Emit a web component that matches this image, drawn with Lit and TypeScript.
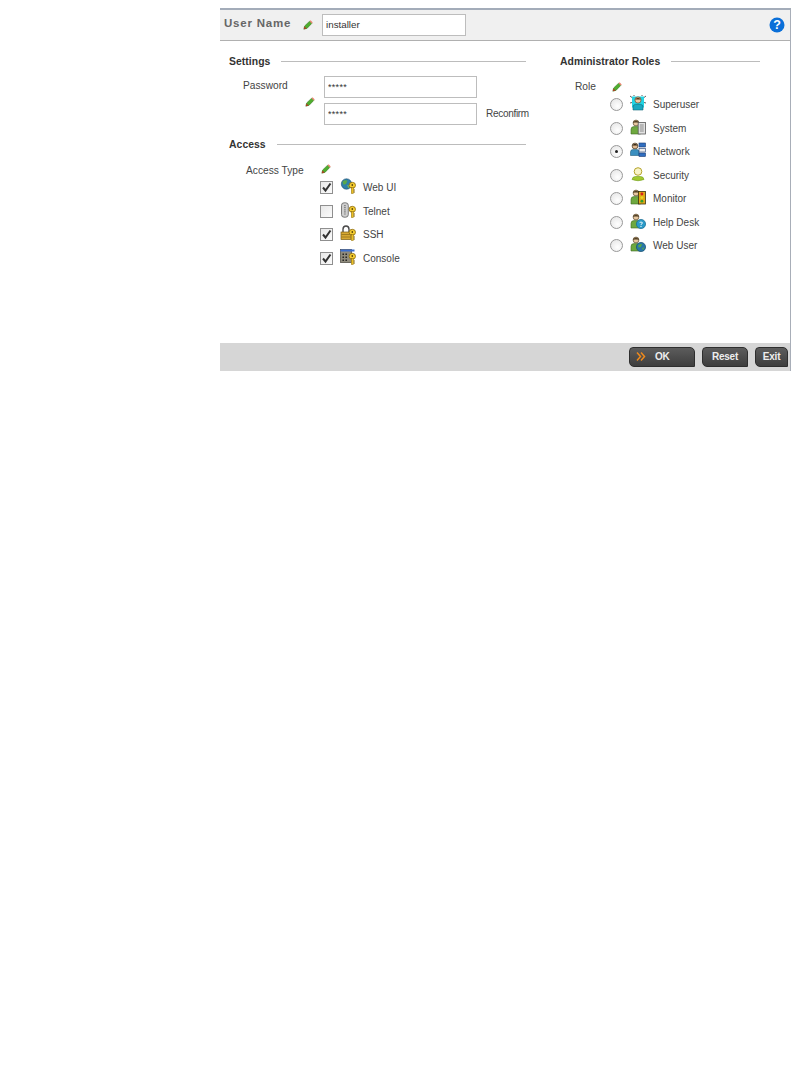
import { LitElement, html, css, svg } from "lit";
import { customElement } from "lit/decorators.js";

const pencil = html`<svg class="pen" width="10" height="10" viewBox="0 0 10 10"><path d="M.8 9.2 L1.6 6 L6.6 1.2 L8.8 3.4 L4 8.4 Z" fill="#4fae2e" stroke="#2f6d1c" stroke-width=".5"/><path d="M6.6 1.2 L7.6 .3 L9.7 2.4 L8.8 3.4 Z" fill="#e8806a"/><path d="M.8 9.2 L1.6 6.4 L3.6 8.4 Z" fill="#b33a22"/></svg>`;

const key = svg`<ellipse cx="12.3" cy="7.3" rx="3.2" ry="3" fill="#f4cc30" stroke="#8a6a10" stroke-width=".8"/><rect x="11.3" y="9.5" width="2.2" height="6" fill="#ecc020" stroke="#8a6a10" stroke-width=".5"/><rect x="11.6" y="6.2" width="1.4" height="1.6" fill="#4a3808"/><path d="M13.6 12h1.4M13.6 14h1.4" stroke="#8a6a10"/>`;

const person = svg`<circle cx="6" cy="4" r="2.9" fill="#e8c8a0" stroke="#5a4a30" stroke-width=".7"/><path d="M3 3.4 Q6 .4 9 3.4" fill="#4a3a20" stroke="#3a2a10" stroke-width=".6"/><path d="M1 15 V10.5 Q1 7.6 4 7.6 H8 Q10 7.6 10.6 9.5 V15 Z" fill="#6ea83f" stroke="#3d6a22" stroke-width=".6"/>`;

const ic = (c: unknown) => html`<svg class="ic" width="16" height="16" viewBox="0 0 16 16">${c}</svg>`;

const accessIcons = {
  web: ic(svg`<circle cx="6.5" cy="6" r="5.2" fill="#2f7fa8" stroke="#1f4f70" stroke-width=".6"/><path d="M2.5 3.5 Q5 1.5 7.5 2.6 L6 6 L3.5 6.8Z" fill="#5aa84a"/><path d="M7 7 L10 7.5 L8.5 10.4 Z" fill="#6ab45a"/>${key}`),
  telnet: ic(svg`<rect x="1.5" y=".8" width="6.8" height="14.4" rx="2.6" fill="#cfcfcf" stroke="#6e6e6e" stroke-width=".9"/><path d="M4.9 3v10" stroke="#888" stroke-width="1.8" stroke-dasharray="1.2 .9"/>${key}`),
  ssh: ic(svg`<path d="M3 7 V4.2 Q3 1 6 1 Q9 1 9 4.2 V7" fill="none" stroke="#4b4b4b" stroke-width="1.4"/><rect x="1" y="7" width="10" height="7.5" fill="#d7a832" stroke="#7b5d12" stroke-width=".7"/><path d="M1.5 9.5h9M1.5 12h9" stroke="#8a6a18" stroke-width=".7"/>${key}`),
  console: ic(svg`<rect x=".5" y=".5" width="11" height="13" fill="#8f8b7c" stroke="#45423a" stroke-width=".7"/><rect x=".5" y=".5" width="14" height="2" fill="#3a6fd0"/><path d="M2.5 4.5h1.4v1.4H2.5zM5.5 4.5h1.4v1.4H5.5zM2.5 7.5h1.4v1.4H2.5zM5.5 7.5h1.4v1.4H5.5zM2.5 10.5h1.4v1.4H2.5zM5.5 10.5h1.4v1.4H5.5z" fill="#1c1c1c"/>${key}`),
};

const roleIcons = {
  superuser: ic(svg`<rect x="2" y="1.5" width="12" height="11" fill="#22d4e4"/><path d="M0 1l2 1.5M16 1l-2 1.5M0 8l2-.5M16 8l-2-.5M4 0v1M12 0v1" stroke="#333" stroke-width=".8"/><circle cx="8" cy="5" r="3.1" fill="#eec9a4" stroke="#6a4a2a" stroke-width=".7"/><path d="M5 4.5Q8 .8 11 4.5" fill="#5a3a1a"/><path d="M3 15V12Q3 9.4 5.5 9.4H10.5Q13 9.4 13 12V15Z" fill="#19a8c0" stroke="#106878" stroke-width=".6"/>`),
  system: ic(svg`${person}<rect x="8.2" y="3.5" width="7.3" height="11.5" fill="#e2e2e2" stroke="#5a5a5a" stroke-width=".8"/><path d="M9.8 6h4M9.8 8h4M9.8 10h4M9.8 12h4" stroke="#777" stroke-width=".8"/>`),
  network: ic(svg`<circle cx="5" cy="4" r="2.9" fill="#e0b890" stroke="#3a3020" stroke-width=".7"/><path d="M2.2 3.4Q5 .6 7.8 3.4" fill="#2a2010"/><path d="M.5 13.5V10Q.5 7.6 3 7.6H7Q9 7.6 9 10V13.5Z" fill="#3a8fc0" stroke="#20607f" stroke-width=".6"/><rect x="9" y="1" width="6.5" height="4" fill="#2f6ec0" stroke="#1a3a70" stroke-width=".6"/><rect x="9" y="6.5" width="6.5" height="3.5" fill="#eee" stroke="#1a3a70" stroke-width=".6"/><rect x="9" y="11" width="6.5" height="3.5" fill="#2f6ec0" stroke="#1a3a70" stroke-width=".6"/>`),
  security: ic(svg`<circle cx="8" cy="5.5" r="3.8" fill="#f8f3c8" stroke="#b5a42a" stroke-width="1"/><path d="M2 13.5Q2.5 10.5 5.5 10.5H10.5Q13.5 10.5 14 13.5Q8 16 2 13.5Z" fill="#a2c92f" stroke="#6e9a1c" stroke-width=".6"/>`),
  monitor: ic(svg`${person}<rect x="8.4" y="2.5" width="7" height="12.5" fill="#e0a818" stroke="#3a3010" stroke-width=".8"/><circle cx="11.9" cy="5" r="1.4" fill="#d8241c"/><circle cx="11.9" cy="8.6" r="1.4" fill="#e8d820"/><circle cx="11.9" cy="12.2" r="1.4" fill="#30a030"/>`),
  help: ic(svg`${person}<circle cx="11" cy="11" r="4.6" fill="#2a9ac8" stroke="#156a90" stroke-width=".7"/><path d="M9.6 9.6Q11 8.4 12.4 9.6Q12.6 10.8 11 11.4V12" fill="none" stroke="#fff" stroke-width=".9"/><circle cx="11" cy="13.4" r=".6" fill="#fff"/>`),
  webuser: ic(svg`${person}<circle cx="11" cy="11" r="4.6" fill="#2877a8" stroke="#174f70" stroke-width=".7"/><path d="M8 9.5Q10 7.5 12 8L11 11L8.7 11.5Z" fill="#58a848"/><path d="M12 12l2.4-.5L13 14Z" fill="#58a848"/>`),
};

@customElement("app-root")
export class AppRoot extends LitElement {
  static styles = css`
    :host { display: block; height: 1075px; padding: 8px 0 0 220px; box-sizing: border-box; font-family: "Liberation Sans", Arial, sans-serif; font-size: 10px; color: #444; background: #fff; }
    .frame { width: 571px; height: 363px; box-sizing: border-box; border-top: 2px solid #a3acb9; border-right: 1px solid #a8aeb8; display: flex; flex-direction: column; }
    .head { height: 31px; box-sizing: border-box; background: #f0f0f0; border-bottom: 1px solid #b0b0b0; display: flex; align-items: center; padding: 0 5px 1px 4px; }
    .head h1 { margin: 0 0 3px; font-size: 11.5px; font-weight: bold; color: #666; letter-spacing: .8px; width: 79px; }
    .head .pen { margin-right: 9px; }
    .uname { width: 144px; height: 22px; font-size: 9.8px; }
    .help { margin-left: auto; }
    input { box-sizing: border-box; border: 1px solid #bdbdbd; background: #fff; padding: 0 3px; font: 9px "Liberation Sans", Arial, sans-serif; letter-spacing: .3px; color: #333; display: block; outline: none; }
    .uname { letter-spacing: 0; }
    .body { flex: 1; display: grid; grid-template-columns: 340px 200px; padding: 14px 0 0 9px; align-content: start; }
    .sect { display: flex; align-items: center; gap: 11px; font-weight: bold; height: 12px; color: #333; font-size: 10.4px; letter-spacing: .05px; }
    .sect::after { content: ""; flex: 1; height: 1px; background: #bcbcbc; }
    .left { width: 297px; }
    .pw { display: grid; grid-template-columns: 76px 19px 153px auto; padding-top: 9px; height: 71px; box-sizing: border-box; }
    .lbl { font-size: 10.2px; padding-left: 14px; white-space: nowrap; }
    .pw .lbl { padding-top: 4px; }
    .pw .pen { margin-top: 21px; }
    .pw input { width: 153px; height: 22px; margin-bottom: 5px; }
    .pw .conf { padding: 32px 0 0 9px; font-size: 10px; letter-spacing: -.3px; white-space: nowrap; }
    .acc { display: grid; grid-template-columns: 91px auto; padding-top: 12px; }
    .acc .lbl { padding-left: 17px; padding-top: 3px; }
    .list { display: flex; flex-direction: column; }
    .row { display: flex; align-items: center; height: 23.5px; font-size: 10px; white-space: nowrap; }
    .penrow { height: 14px; display: flex; align-items: center; }
    .acc .penrow { padding-left: 1px; }
    .box { width: 13px; height: 13px; box-sizing: border-box; border: 1px solid #8f8f8f; background: linear-gradient(135deg,#e8e8e8,#fbfbfb); margin-right: 7px; display: flex; align-items: center; justify-content: center; }
    .row .ic { margin-right: 7px; margin-top: -3px; }
    .right { width: 200px; margin-left: -9px; }
    .role { display: grid; grid-template-columns: 50px auto; padding-top: 13px; }
    .role .lbl { padding-left: 15px; padding-top: 1px; }
    .radio { width: 13px; height: 13px; box-sizing: border-box; border-radius: 50%; border: 1px solid #999; background: radial-gradient(circle at 60% 65%, #fff, #e2e2e2); margin-right: 7px; display: flex; align-items: center; justify-content: center; }
    .radio i { width: 3px; height: 3px; border-radius: 50%; background: #222; }
    .role .penrow { height: 13px; padding-left: 2px; }
    .foot { height: 27px; background: #d6d6d6; display: flex; align-items: center; justify-content: flex-end; gap: 7px; padding: 0 2px 1px 0; }
    button { height: 20px; box-sizing: border-box; border: 1px solid #2e2e2e; border-radius: 4px 5px 0 5px; background: linear-gradient(#5c5c5c,#3e3e3e); color: #eee; font: bold 10px "Liberation Sans", Arial, sans-serif; letter-spacing: -.2px; padding: 0; display: flex; align-items: center; justify-content: center; }
    .ok { width: 66px; justify-content: flex-start; padding-left: 6px; }
    .ok svg { margin-right: 9px; }
    .reset { width: 46px; }
    .exit { width: 33px; }
  `;

  render() {
    const chk = html`<svg width="11" height="11" viewBox="0 0 11 11"><path d="M2 5.5 L4.5 8.5 L9.5 1.5" fill="none" stroke="#333" stroke-width="2"/></svg>`;
    const access: [string, boolean, unknown][] = [
      ["Web UI", true, accessIcons.web],
      ["Telnet", false, accessIcons.telnet],
      ["SSH", true, accessIcons.ssh],
      ["Console", true, accessIcons.console],
    ];
    const roles: [string, boolean, unknown][] = [
      ["Superuser", false, roleIcons.superuser],
      ["System", false, roleIcons.system],
      ["Network", true, roleIcons.network],
      ["Security", false, roleIcons.security],
      ["Monitor", false, roleIcons.monitor],
      ["Help Desk", false, roleIcons.help],
      ["Web User", false, roleIcons.webuser],
    ];
    return html`<div class="frame">
      <div class="head">
        <h1>User Name</h1>
        ${pencil}
        <input class="uname" .value=${"installer"} />
        <svg class="help" width="16" height="16" viewBox="0 0 16 16"><circle cx="8" cy="8" r="7.5" fill="#0a6fd8"/><text x="8" y="12.4" text-anchor="middle" font-family="Liberation Sans" font-weight="bold" font-size="12.5" fill="#fff">?</text></svg>
      </div>
      <div class="body">
        <div class="left">
          <div class="sect">Settings</div>
          <div class="pw">
            <div class="lbl">Password</div>
            ${pencil}
            <div><input .value=${"*****"} /><input .value=${"*****"} /></div>
            <div class="conf">Reconfirm</div>
          </div>
          <div class="sect">Access</div>
          <div class="acc">
            <div class="lbl">Access Type</div>
            <div class="list">
              <div class="penrow">${pencil}</div>
              ${access.map(([t, c, i]) => html`<div class="row"><span class="box">${c ? chk : ""}</span>${i}<span>${t}</span></div>`)}
            </div>
          </div>
        </div>
        <div class="right">
          <div class="sect">Administrator Roles</div>
          <div class="role">
            <div class="lbl">Role</div>
            <div class="list">
              <div class="penrow">${pencil}</div>
              ${roles.map(([t, s, i]) => html`<div class="row"><span class="radio">${s ? html`<i></i>` : ""}</span>${i}<span>${t}</span></div>`)}
            </div>
          </div>
        </div>
      </div>
      <div class="foot">
        <button class="ok"><svg width="10" height="9" viewBox="0 0 10 9"><path d="M1 .5 L4.5 4.5 L1 8.5M5 .5 L8.5 4.5 L5 8.5" fill="none" stroke="#ef8a1c" stroke-width="1.5"/></svg>OK</button>
        <button class="reset">Reset</button>
        <button class="exit">Exit</button>
      </div>
    </div>`;
  }
}
